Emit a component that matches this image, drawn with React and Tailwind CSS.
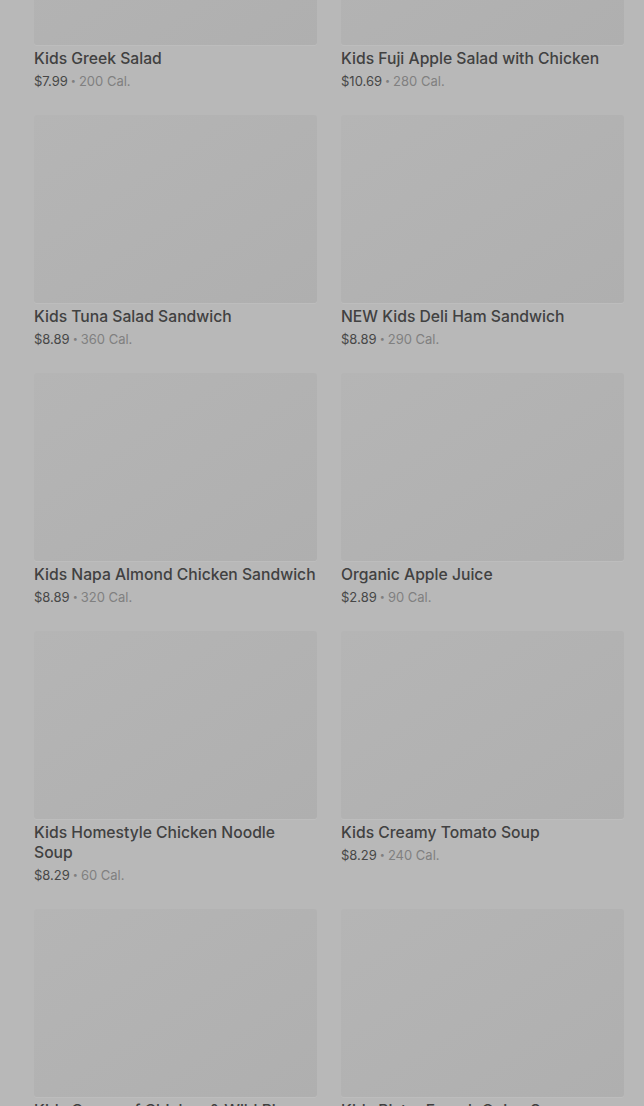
import React from 'react';

const items = [
  { name: 'Kids Greek Salad', price: '$7.99', cal: '200 Cal.' },
  { name: 'Kids Fuji Apple Salad with Chicken', price: '$10.69', cal: '280 Cal.' },
  { name: 'Kids Tuna Salad Sandwich', price: '$8.89', cal: '360 Cal.' },
  { name: 'NEW Kids Deli Ham Sandwich', price: '$8.89', cal: '290 Cal.' },
  { name: 'Kids Napa Almond Chicken Sandwich', price: '$8.89', cal: '320 Cal.' },
  { name: 'Organic Apple Juice', price: '$2.89', cal: '90 Cal.' },
  { name: 'Kids Homestyle Chicken Noodle Soup', price: '$8.29', cal: '60 Cal.' },
  { name: 'Kids Creamy Tomato Soup', price: '$8.29', cal: '240 Cal.' },
  { name: 'Kids Cream of Chicken & Wild Rice Soup', price: '$8.29', cal: '100 Cal.' },
  { name: 'Kids Bistro French Onion Soup', price: '$8.29', cal: '210 Cal.' },
];

const MenuCard = ({ item }) => (
  <div className="flex flex-col">
    <div className="h-[188px] rounded-[3px] bg-gradient-to-br from-[#b5b5b5] to-[#afafaf] shadow-[0_1px_0_#bdbdbd]" />
    <div className="mt-[4px] text-[15.7px] leading-[20px] font-medium text-[#414141]">{item.name}</div>
    <div className="mt-[3px] flex items-center text-[13px] leading-[18px]">
      <span className="text-[#474747]">{item.price}</span>
      <span className="mx-[3px] text-[9px] text-[#7f7f7f]">•</span>
      <span className="text-[#808080]">{item.cal}</span>
    </div>
  </div>
);

export default function App() {
  return (
    <div className="h-[1106px] w-[644px] overflow-hidden bg-[#b8b8b8]" style={{ fontFamily: 'Inter, "Noto Sans", sans-serif' }}>
      <div className="-mt-[143px] grid grid-cols-2 gap-x-[24px] gap-y-[25px] pl-[34px] pr-[20px]">
        {items.map((item) => (
          <MenuCard key={item.name} item={item} />
        ))}
      </div>
    </div>
  );
}
